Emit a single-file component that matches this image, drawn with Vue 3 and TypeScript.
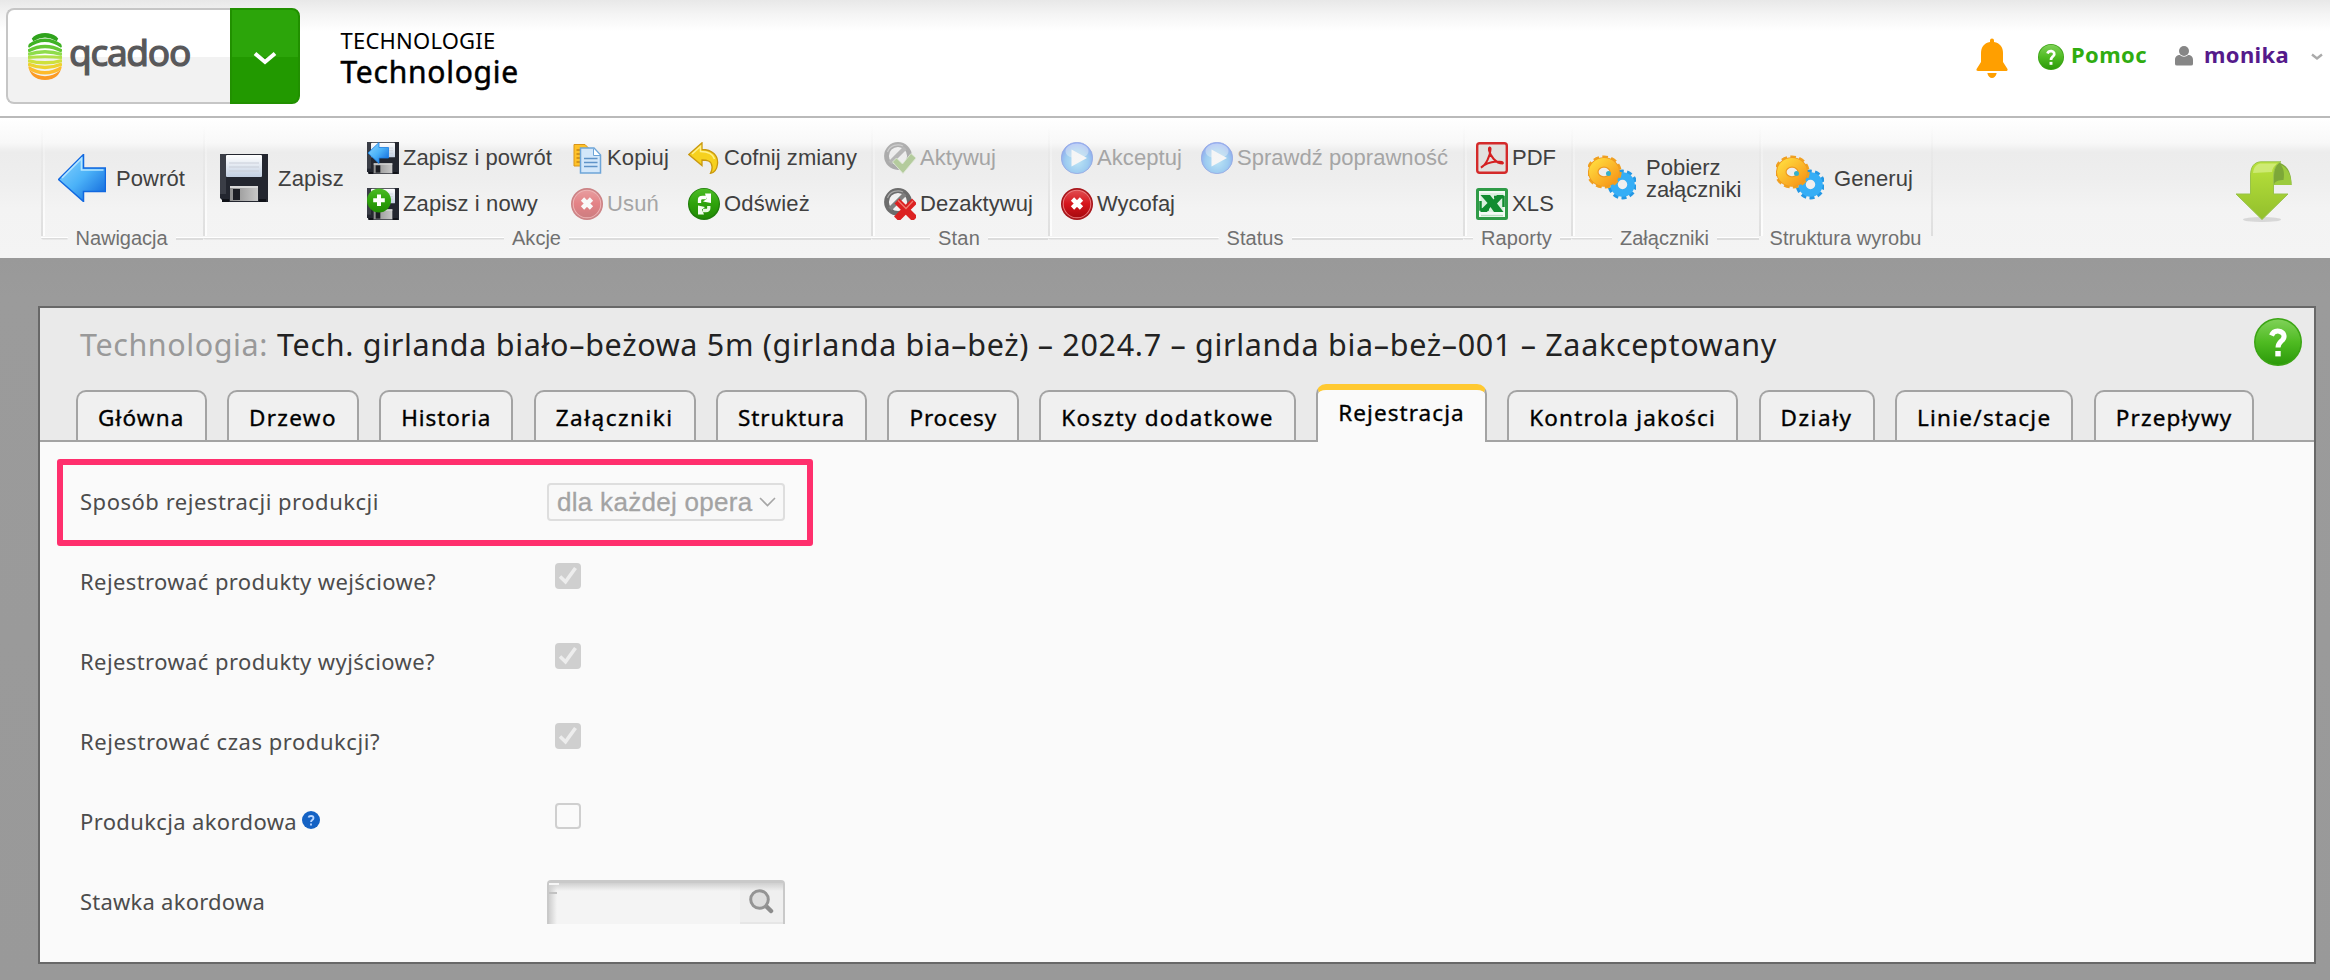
<script setup lang="ts">
type IconName =
  | 'back' | 'save' | 'saveBack' | 'saveNew' | 'copy' | 'cancel' | 'undo' | 'refresh'
  | 'activate' | 'deactivate' | 'play' | 'pdf' | 'xls' | 'gears'

interface Button { icon: IconName; label: string; width: number; disabled?: boolean }
interface Column { big?: boolean; width?: number; items: Button[] }
interface Group { name: string; width: number; captionWidth: number; columns: Column[] }

const groups: Group[] = [
  { name: 'Nawigacja', width: 162, captionWidth: 92, columns: [
    { big: true, items: [{ icon: 'back', label: 'Powrót', width: 69 }] }] },
  { name: 'Akcje', width: 668, captionWidth: 49, columns: [
    { big: true, width: 147, items: [{ icon: 'save', label: 'Zapisz', width: 66 }] },
    { width: 204, items: [
      { icon: 'saveBack', label: 'Zapisz i powrót', width: 149 },
      { icon: 'saveNew', label: 'Zapisz i nowy', width: 135 }] },
    { width: 117, items: [
      { icon: 'copy', label: 'Kopiuj', width: 62 },
      { icon: 'cancel', label: 'Usuń', width: 52, disabled: true }] },
    { items: [
      { icon: 'undo', label: 'Cofnij zmiany', width: 133 },
      { icon: 'refresh', label: 'Odśwież', width: 86 }] }] },
  { name: 'Stan', width: 177, captionWidth: 42, columns: [
    { items: [
      { icon: 'activate', label: 'Aktywuj', width: 76, disabled: true },
      { icon: 'deactivate', label: 'Dezaktywuj', width: 113 }] }] },
  { name: 'Status', width: 415, captionWidth: 57, columns: [
    { width: 140, items: [
      { icon: 'play', label: 'Akceptuj', width: 85, disabled: true },
      { icon: 'cancel', label: 'Wycofaj', width: 78 }] },
    { items: [{ icon: 'play', label: 'Sprawdź poprawność', width: 211, disabled: true }] }] },
  { name: 'Raporty', width: 108, captionWidth: 71, columns: [
    { items: [
      { icon: 'pdf', label: 'PDF', width: 44 },
      { icon: 'xls', label: 'XLS', width: 42 }] }] },
  { name: 'Załączniki', width: 188, captionWidth: 89, columns: [
    { big: true, items: [{ icon: 'gears', label: 'Pobierz\nzałączniki', width: 97 }] }] },
  { name: 'Struktura wyrobu', width: 174, captionWidth: 152, columns: [
    { big: true, items: [{ icon: 'gears', label: 'Generuj', width: 79 }] }] },
]

const tabs = [
  { label: 'Główna', width: 86.5 },
  { label: 'Drzewo', width: 88 },
  { label: 'Historia', width: 90 },
  { label: 'Załączniki', width: 118 },
  { label: 'Struktura', width: 107 },
  { label: 'Procesy', width: 87.5 },
  { label: 'Koszty dodatkowe', width: 212.5 },
  { label: 'Rejestracja', width: 126.5, active: true },
  { label: 'Kontrola jakości', width: 187 },
  { label: 'Działy', width: 72 },
  { label: 'Linie/stacje', width: 134.5 },
  { label: 'Przepływy', width: 116.5 },
]

const fields = [
  { label: 'Sposób rejestracji produkcji', width: 299, type: 'select' },
  { label: 'Rejestrować produkty wejściowe?', width: 356, type: 'check', checked: true },
  { label: 'Rejestrować produkty wyjściowe?', width: 355, type: 'check', checked: true },
  { label: 'Rejestrować czas produkcji?', width: 300, type: 'check', checked: true },
  { label: 'Produkcja akordowa', width: 217, type: 'check', hint: true },
  { label: 'Stawka akordowa', width: 185, type: 'lookup' },
]

// Tracks a single-line label so that it fills the given width.
const vFit = {
  mounted(el: HTMLElement, binding: { value: number }) {
    const text = el.textContent ?? ''
    if (text.includes('\n')) return
    const natural = el.getBoundingClientRect().width
    el.style.letterSpacing = `${(binding.value - natural) / text.length}px`
  },
}
</script>

<template>
  <div class="page">
    <svg class="defs" width="0" height="0" aria-hidden="true">
      <defs>
        <linearGradient id="gBlue" x1="0" y1="0" x2="1" y2="1"><stop offset="0" stop-color="#8fd6ff" /><stop offset=".5" stop-color="#4bb2f8" /><stop offset="1" stop-color="#0a5fd8" /></linearGradient>
        <linearGradient id="gGreen" x1="0" y1="0" x2="0" y2="1"><stop offset="0" stop-color="#7fd158" /><stop offset=".5" stop-color="#4fbb22" /><stop offset="1" stop-color="#2c9a0a" /></linearGradient>
        <linearGradient id="gDeep" x1="0" y1="0" x2="0" y2="1"><stop offset="0" stop-color="#4cbb26" /><stop offset=".5" stop-color="#2fa30c" /><stop offset="1" stop-color="#218a04" /></linearGradient>
        <linearGradient id="gRed" x1="0" y1="0" x2="0" y2="1"><stop offset="0" stop-color="#e04a4e" /><stop offset=".5" stop-color="#d6141c" /><stop offset="1" stop-color="#a80a10" /></linearGradient>
        <radialGradient id="gPlay" cx=".5" cy=".6" r=".6"><stop offset="0" stop-color="#8fe0ff" /><stop offset=".6" stop-color="#52aef4" /><stop offset="1" stop-color="#2f5fee" /></radialGradient>
        <linearGradient id="gGold" x1="0" y1="0" x2="1" y2="1"><stop offset="0" stop-color="#ffd83c" /><stop offset="1" stop-color="#f79a1a" /></linearGradient>
        <linearGradient id="gPaper" x1="0" y1="0" x2="0" y2="1"><stop offset="0" stop-color="#fff" /><stop offset="1" stop-color="#c3d0e2" /></linearGradient>
        <linearGradient id="gLime" x1="0" y1="0" x2="0" y2="1"><stop offset="0" stop-color="#b9e23c" /><stop offset="1" stop-color="#92bf2c" /></linearGradient>
        <linearGradient id="gMetal" x1="0" y1="0" x2="1" y2="0"><stop offset="0" stop-color="#8c8c8c" /><stop offset="1" stop-color="#c8c8c8" /></linearGradient>
        <clipPath id="egg"><path d="M0 14Q3 0 17 0T34 14V33Q31 47 17 47T0 33Z" /></clipPath>
      </defs>
      <symbol id="i-back" viewBox="0 0 48 48"><path d="M.5 25.500 25.500 .5V14H47.500V37.500H25.500V47.500Z" fill="url(#gBlue)" stroke="#1168e0" stroke-width="1.500" /><path d="M4 24 23.500 4.500V16H45.500" fill="none" stroke="#b5e6ff" stroke-width="1.600" /></symbol>
      <symbol id="i-save" viewBox="0 0 48 48"><path d="M0 0H48V48H4L0 44Z" fill="#23262f" /><path d="M0 0H6V40H0Z" fill="#3a3d46" /><rect x="6" y="1" width="36" height="22" rx="1" fill="url(#gPaper)" /><path d="M9 9H39M9 13H39M9 17H39" stroke="#c9ced8" stroke-width="1" /><path d="M10 32H38V47H10Z" fill="url(#gMetal)" /><path d="M10 32H38V34H10Z" fill="#d9d9d9" /><rect x="13" y="35" width="7" height="11" fill="#1c1e24" /><path d="M2 48V45H9V48ZM39 48V45H46V48Z" fill="#101218" /></symbol>
      <symbol id="i-saveBack" viewBox="0 0 32 32"><use href="#i-save" width="32" height="32" /><path d="M1 11 12 .5V5.500H21.500V16H12V21.500Z" fill="url(#gBlue)" stroke="#1a7fe4" stroke-width=".8" /></symbol>
      <symbol id="i-saveNew" viewBox="0 0 32 32"><use href="#i-save" width="32" height="32" /><circle cx="12" cy="12.500" r="12" fill="url(#gDeep)" /><path d="M12 6.500V18M6.200 12.300H17.800" stroke="#fff" stroke-width="4" /></symbol>
      <symbol id="i-copy" viewBox="0 0 32 32"><path d="M3 2.500H14L18.500 7V24H3Z" fill="#ffc229" stroke="#d9951a" /><path d="M5.500 8H15M5.500 12H15M5.500 16H15M5.500 20H12" stroke="#c98510" stroke-width="1.500" /><path d="M9.500 6H23L29.500 13V31H9.500Z" fill="#d3e7fa" stroke="#6ea5d8" stroke-width="1.500" /><path d="M22.500 6.500V13.500H29" fill="#fff" stroke="#6ea5d8" /><path d="M13 16.500H26.500M13 20.500H26.500M13 24.500H26.500" stroke="#5f93c8" stroke-width="1.600" /></symbol>
      <symbol id="i-cancel" viewBox="0 0 32 32"><circle cx="16" cy="16" r="16" fill="#a8161b" /><circle cx="16" cy="16" r="14.300" fill="#ec7a7d" /><circle cx="16" cy="16" r="13.300" fill="url(#gRed)" /><path d="M11.500 11 20.500 20M20.500 11 11.500 20" stroke="#fff" stroke-width="4.600" /></symbol>
      <symbol id="i-undo" viewBox="0 0 32 32"><path d="M.8 12.500 14 .8V7.500C24 7.500 30.500 13.500 29.500 22 29 27.500 26 31.300 22.500 31.300 25 27 24.500 20.500 20.500 19 18.500 18 16.500 18 14 18V23.500Z" fill="#f6d11e" stroke="#c9980f" stroke-width="1.300" /><path d="M4 12 12.500 4.500V9.500C20 9.500 25 12 26.500 17" fill="none" stroke="#fff08a" stroke-width="1.500" /></symbol>
      <symbol id="i-refresh" viewBox="0 0 32 32"><circle cx="16" cy="16" r="16" fill="#1f7d0a" /><circle cx="16" cy="15.500" r="14.800" fill="url(#gDeep)" /><path d="M11.500 15V12Q11.500 9.500 14.500 9.500H18" fill="none" stroke="#fff" stroke-width="3.300" /><path d="M17 5.500H23V15L15 13.500 18.500 11Z" fill="#fff" /><path d="M20.800 18V20Q20.800 22.500 18 22.500H15" fill="none" stroke="#e9f8e2" stroke-width="3.300" /><path d="M16 26.500H10V17.500L17 19 14 21.500Z" fill="#f2fbee" /></symbol>
      <symbol id="i-ring" viewBox="0 0 32 32"><circle cx="14" cy="14" r="11.500" fill="none" stroke="#6c6c6c" stroke-width="4.800" /><path d="M6 21 21 6" stroke="#808080" stroke-width="4.500" /><path d="M3.500 10C6 3 14 1.500 19 4" fill="none" stroke="#a8a8a8" stroke-width="1.200" /></symbol>
      <symbol id="i-activate" viewBox="0 0 32 32"><use href="#i-ring" width="32" height="32" /><path d="M8.500 20 12.500 16 18.500 22 27 11.500 32 16 19 31.500Z" fill="#7cab4f" stroke="#d7e6c8" stroke-width=".8" /></symbol>
      <symbol id="i-deactivate" viewBox="0 0 32 32"><use href="#i-ring" width="32" height="32" /><path d="M13 13 31 31M30.500 13 12.500 31" stroke="#dc2222" stroke-width="7" /><path d="M14 12.500 22 20.500 29 13" fill="none" stroke="#f07a70" stroke-width="1.300" /></symbol>
      <symbol id="i-play" viewBox="0 0 32 32"><circle cx="16" cy="16" r="15.700" fill="url(#gPlay)" stroke="#3d62d8" stroke-width=".8" /><ellipse cx="16" cy="9" rx="11.500" ry="7.500" fill="#fff" opacity=".4" /><path d="M10.500 7.500 26 16 10.500 24.500Z" fill="#fff" /></symbol>
      <symbol id="i-pdf" viewBox="0 0 32 32"><rect x="1.200" y="1.200" width="29.600" height="29.600" rx="2.500" fill="#e2e1de" stroke="#d42a2a" stroke-width="2.400" /><path d="M5 25.500C9.500 23.500 14.500 14 14.500 7 14.500 5 12.500 5 13 8 14 14 20 21.500 26.500 21.500 28 20.500 25 19.300 20 19.500 14 20 9.500 21.500 5 25.500Z" fill="none" stroke="#d42020" stroke-width="2.100" /></symbol>
      <symbol id="i-xls" viewBox="0 0 32 32"><rect x="1.500" y="1.500" width="29" height="29" rx="1" fill="#f4faf5" stroke="#2f9b47" stroke-width="3" /><path d="M4.500 5H27.500V24H4.500Z" fill="#dcf0e0" /><path d="M4.500 7H14L17.500 11.500 21 7H27.500V8.500L21 15.500 27.500 24H18L14.500 19 11 24H4.500V22L11.500 15Z" fill="#118c30" /><path d="M18 9H27.500V19M4.500 13V21.500H13" fill="none" stroke="#118c30" stroke-width="2.500" /><path d="M5 27.500H27" stroke="#b9dfc2" stroke-width="1.400" /></symbol>
      <symbol id="i-gears" viewBox="0 0 48 48">
        <circle cx="34.500" cy="30.500" r="12.400" fill="none" stroke="#2598e4" stroke-width="5" stroke-dasharray="4.740 3.050" /><circle cx="34.500" cy="30.500" r="8.500" fill="none" stroke="#35aef6" stroke-width="7.500" />
        <ellipse cx="16" cy="18" rx="15.200" ry="14" fill="none" stroke="#f0a020" stroke-width="5" stroke-dasharray="5.300 3.050" /><ellipse cx="16" cy="18" rx="10.600" ry="9.500" fill="none" stroke="#ee9a20" stroke-width="10.500" /><ellipse cx="16" cy="18" rx="10.800" ry="9.700" fill="none" stroke="url(#gGold)" stroke-width="8.500" />
        <circle cx="20.500" cy="19.500" r="2.500" fill="#36b0c8" />
      </symbol>
      <symbol id="i-help" viewBox="0 0 48 48"><circle cx="24" cy="24" r="24" fill="#3ba414" /><circle cx="24" cy="24" r="22.500" fill="url(#gGreen)" /><path d="M17.500 17.500C19 13.500 22 12.800 25 13.200 30 14 31.500 18.500 28.500 22 26 24.500 24 25.500 24 29.500" fill="none" stroke="#fff" stroke-width="5" /><rect x="21.300" y="33" width="5.400" height="5.400" fill="#fff" /></symbol>
    </svg>

    <header class="top">
      <div class="brand">
        <div class="logo">
          <svg class="mark" viewBox="0 0 34 47">
            <g clip-path="url(#egg)" fill="none" stroke-width="3.300">
              <path d="M4 6Q17 -2 30 6" stroke="#2fa31c" stroke-width="5" />
              <path d="M0 13.500Q17 1 34 13.500" stroke="#3fb224" />
              <path d="M0 18Q17 9 34 18" stroke="#64c834" />
              <path d="M0 21.500Q17 16 34 21.500" stroke="#8fdc4c" />
              <path d="M0 24.500Q17 23 34 24.500" stroke="#b2e04a" stroke-width="2.800" />
              <path d="M0 27.500Q17 32 34 27.500" stroke="#cfe03c" />
              <path d="M0 31Q17 38 34 31" stroke="#ecd32e" />
              <path d="M0 34.500Q17 45 34 34.500" stroke="#fdbb2c" />
              <path d="M0 38.500Q17 52 34 38.500" stroke="#fb9a24" stroke-width="4" />
            </g>
          </svg>
          <span v-fit="121" class="word">qcadoo</span>
        </div>
        <div class="drop">
          <svg width="24" height="14" viewBox="0 0 24 14"><path d="M2 2.500 12 11 22 2.500" fill="none" stroke="#fff" stroke-width="4" /></svg>
        </div>
      </div>
      <div class="crumbs">
        <div class="section"><span v-fit="155">TECHNOLOGIE</span></div>
        <div class="view"><span v-fit="178.500">Technologie</span></div>
      </div>
      <div class="user-bar">
        <svg class="bell" viewBox="0 0 32 40"><path d="M14 4V2.500a2 2 0 0 1 4 0V4C24 5 27 9.500 27 15V24L31.500 31C32 32.500 31 33 30 33H2C.8 33 0 32.300 .6 31L5 24V15C5 9.500 8 5 14 4ZM11.300 35H20.700C20 38.500 18 40 16 40S12 38.500 11.300 35Z" fill="#ff9f00" /></svg>
        <svg class="help-small"><use href="#i-help" /></svg>
        <span v-fit="76" class="link green">Pomoc</span>
        <svg class="person" viewBox="0 0 18 20"><circle cx="9" cy="5" r="5" fill="#868686" /><path d="M0 18V14C0 10.500 2 9 5 9 7 11.300 11 11.300 13 9 16 9 18 10.500 18 14V18Q18 19.500 16 19.500H2Q0 19.500 0 18Z" fill="#868686" /></svg>
        <span v-fit="85" class="link purple">monika</span>
        <svg class="caret" viewBox="0 0 12 8"><path d="M1 1.500 6 5.500 11 1.500" fill="none" stroke="#aaa" stroke-width="2.400" /></svg>
      </div>
    </header>

    <nav class="ribbon">
      <section v-for="g in groups" :key="g.name" class="group" :class="{ wide: g.columns[0].big }" :style="{ width: g.width + 'px' }">
        <div class="columns">
          <div v-for="(c, i) in g.columns" :key="i" class="column" :class="{ big: c.big }" :style="c.width ? { width: c.width + 'px' } : undefined">
            <div v-for="b in c.items" :key="b.label" class="button" :class="{ disabled: b.disabled }">
              <svg class="icon"><use :href="'#i-' + b.icon" /></svg>
              <span v-fit="b.width" class="text">{{ b.label }}</span>
            </div>
          </div>
        </div>
        <div class="legend"><span v-fit="g.captionWidth" class="caption">{{ g.name }}</span></div>
      </section>
      <svg class="pull" viewBox="0 0 58 62">
        <ellipse cx="27" cy="58.500" rx="19" ry="2.500" fill="#bbb" opacity=".5" />
        <path d="M39 1C50 1 56.500 9 56.500 24H38.500V10Z" fill="#7da838" />
        <path d="M46 4C53 7 56.500 15 56.500 24H39C39 20 45 19 48.500 19 49.500 13 49 8 46 4Z" fill="#9ccb3e" />
        <path d="M15.500 33V15C15.500 6 19 1 26 .8H46C41 3 38.500 8 38.500 17V33H53L27 58.500 1 33Z" fill="url(#gLime)" stroke="#98c24a" stroke-width="1" />
        <path d="M18 12C19 5 22 2.500 27 2.500H42C39 5 37 8 37 11Z" fill="#d9f08c" opacity=".7" />
      </svg>
    </nav>

    <main class="desk">
      <div class="window">
        <div class="title">
          <span v-fit="188" class="kind">Technologia:</span>
          <span v-fit="1500" class="name">Tech. girlanda biało–beżowa 5m (girlanda bia–beż) – 2024.7 – girlanda bia–beż–001 – Zaakceptowany</span>
          <svg class="help"><use href="#i-help" /></svg>
        </div>
        <div class="tabs">
          <div v-for="t in tabs" :key="t.label" class="tab" :class="{ active: t.active }"><span v-fit="t.width">{{ t.label }}</span></div>
        </div>
        <div class="form">
          <div class="highlight"></div>
          <div v-for="f in fields" :key="f.label" class="row">
            <div class="label">
              <span v-fit="f.width">{{ f.label }}</span>
              <svg v-if="f.hint" class="hint" viewBox="0 0 18 18"><circle cx="9" cy="9" r="9" fill="#1462c4" /><path d="M6.500 6.500C7 4.500 11.500 4.300 11.500 7 11.500 9 9 9 9 11M9 12.500V14.500" fill="none" stroke="#b9d6ff" stroke-width="1.800" /></svg>
            </div>
            <div v-if="f.type === 'select'" class="select">
              <span v-fit="195.500">dla każdej opera</span>
              <svg width="17" height="10" viewBox="0 0 17 10"><path d="M1 1 8.500 8.500 16 1" fill="none" stroke="#a6a6a6" stroke-width="1.600" /></svg>
            </div>
            <div v-else-if="f.type === 'check'" class="check" :class="{ checked: f.checked }">
              <svg v-if="f.checked" width="26" height="26" viewBox="0 0 26 26"><path d="M5 13.500 10.500 18.800 20.500 5" fill="none" stroke="#ededed" stroke-width="3.600" /></svg>
            </div>
            <div v-else class="lookup">
              <div class="entry"></div>
              <div class="find"><svg width="25" height="26" viewBox="0 0 25 26"><path d="M17 17 22 22" stroke="#8c8c8c" stroke-width="4.500" stroke-linecap="round" /><circle cx="10.500" cy="10.500" r="8.800" fill="#dedede" stroke="#949494" stroke-width="3" /></svg></div>
            </div>
          </div>
        </div>
      </div>
    </main>
  </div>
</template>

<style>
body { background: #999; overflow: hidden; }
</style>

<style scoped>
.page { width: 2330px; height: 980px; display: flex; flex-direction: column; overflow: hidden; background: #999; font-family: "Noto Sans", "Open Sans", sans-serif; white-space: nowrap; }
.page span { display: inline-block; }
.defs { position: absolute; }

.top { height: 116px; flex: none; display: flex; align-items: flex-start; background: linear-gradient(#e8e8e8, #f4f4f4 14px, #fff 31px); border-bottom: 2px solid #bababa; }
.brand { display: flex; margin: 8px 0 0 6px; width: 294px; height: 96px; }
.logo { box-sizing: border-box; width: 224px; height: 96px; border: 2px solid #c6c6c6; border-right: 0; border-radius: 8px 0 0 8px; background: linear-gradient(#fff 47px, #f2f2f2 47px); display: flex; align-items: flex-start; padding: 23px 0 0 20px; }
.mark { width: 34px; height: 47px; flex: none; }
.word { margin: -6px 0 0 7px; font-size: 37px; line-height: 50px; color: #58585a; -webkit-text-stroke: 1.200px #58585a; }
.drop { box-sizing: border-box; width: 70px; height: 96px; border: 2px solid #219000; border-radius: 0 8px 8px 0; background: linear-gradient(#2ca50a 47px, #229900 47px); display: flex; align-items: center; justify-content: center; padding-top: 4px; }
.crumbs { margin: 25px 0 0 40.500px; color: #000; }
.section { font-size: 22px; line-height: 30px; }
.view { font-size: 30px; line-height: 34px; -webkit-text-stroke: .5px #000; }
.user-bar { margin-left: auto; display: flex; align-items: flex-start; padding-right: 7px; }
.bell { width: 32px; height: 40px; margin: 38px 30px 0 0; }
.help-small { width: 26px; height: 26px; margin: 44px 7px 0 0; }
.link { margin-top: 39px; font-size: 22px; line-height: 30px; font-weight: 700; }
.green { color: #30ac10; margin-right: 28px; }
.purple { color: #551a8b; margin-right: 22px; }
.person { width: 18px; height: 20px; margin: 46px 11px 0 0; }
.caret { width: 12px; height: 8px; margin-top: 53px; }

.ribbon { height: 140px; flex: none; display: flex; padding-left: 40.500px; background: linear-gradient(#fff, #f8f8f8 25px, #ececec 34px, #eee 60px, #f3f3f3 90px, #f4f4f4); font-family: "Liberation Sans", Arial, sans-serif; }
.group { flex: none; box-sizing: border-box; height: 140px; padding-top: 24px; background: linear-gradient(rgba(222,222,222,0), #dedede) 0 8px / 2px 110px no-repeat, linear-gradient(rgba(255,255,255,0), #fdfdfd) 2px 8px / 2px 110px no-repeat; }
.group:last-of-type { background: linear-gradient(rgba(222,222,222,0), #dedede) 0 8px / 2px 110px no-repeat, linear-gradient(rgba(255,255,255,0), #fdfdfd) 2px 8px / 2px 110px no-repeat, linear-gradient(rgba(222,222,222,0), #dedede) right 8px / 2px 110px no-repeat; }
.columns { display: flex; height: 84px; padding-left: 13.500px; }
.wide .columns { padding-left: 17.500px; }
.column { display: flex; flex-direction: column; gap: 14px; }
.column.big { padding-top: 12px; }
.button { display: flex; align-items: center; height: 32px; gap: 4px; color: #404040; font-size: 22px; line-height: 22px; }
.big .button { height: 48px; gap: 10px; }
.icon { width: 32px; height: 32px; flex: none; }
.big .icon { width: 48px; height: 48px; }
.text { white-space: pre; }
.big .text { padding-top: 2px; }
.disabled .icon { opacity: .5; }
.disabled { color: #a5a5a5; }
.legend { display: flex; align-items: center; height: 24px; color: #707070; font-size: 20px; line-height: 24px; }
.legend::before, .legend::after { content: ""; flex: 1; height: 2px; background: #dcdcdc; border-top: 1px solid #fff; }
.legend::before { border-bottom-left-radius: 6px; margin-right: 8px; }
.legend::after { margin-left: 8px; }
.group:last-of-type .legend::before, .group:last-of-type .legend::after { visibility: hidden; }
.pull { width: 58px; height: 62px; margin: 43px 37px 0 auto; }

.desk { flex: 1; padding: 48px 14px 16px 38px; background: linear-gradient(#999, #9b9b9b 40px, #999); }
.window { box-sizing: border-box; width: 2278px; height: 658px; border: 2px solid #686868; background: #fafafa; }
.title { height: 76px; background: #eaeaea; display: flex; align-items: flex-start; padding: 0 12px 0 40px; font-size: 30.500px; line-height: 40px; }
.title span { margin-top: 16px; }
.kind { color: #999; margin-right: 9px; }
.name { color: #222; }
.help { width: 48px; height: 48px; margin: 10px 0 0 auto; }
.tabs { height: 58px; box-sizing: border-box; display: flex; align-items: flex-end; gap: 20.400px; padding-left: 36px; background: #eaeaea; border-bottom: 2px solid #a3a3a3; font-size: 22.500px; line-height: 30px; color: #000; -webkit-text-stroke: .35px #000; }
.tab { box-sizing: border-box; height: 50px; border: 2px solid #a3a3a3; border-bottom: 0; border-radius: 10px 10px 0 0; background: #f0f0f0; padding: 11px 20px 0; }
.tab.active { height: 58px; margin-bottom: -2px; border-top: 6px solid #ffc931; background: #fafafa; padding-top: 8px; }
.form { position: relative; padding-top: 19px; }
.highlight { position: absolute; left: 17px; top: 17px; width: 756px; height: 87px; box-sizing: border-box; border: 6px solid #ff2f6d; border-radius: 3px; }
.row { height: 80px; display: flex; align-items: center; padding-left: 40px; }
.label { width: 467px; display: flex; align-items: center; font-size: 22px; line-height: 30px; color: #4c4c4c; }
.hint { width: 18px; height: 18px; margin: -2px 0 0 5px; }
.select { box-sizing: border-box; width: 238px; height: 38px; margin-top: 2px; border: 2px solid #dedede; border-radius: 4px; background: #f8f8f8; display: flex; align-items: center; justify-content: space-between; padding: 0 7px 0 8px; font: 26px/32px "Liberation Sans", Arial, sans-serif; color: #a3a3a3; -webkit-text-stroke: .3px #a3a3a3; }
.check { box-sizing: border-box; width: 26px; height: 26px; margin: -10px 0 0 8px; border: 2px solid #cfcfcf; border-radius: 4px; }
.check.checked { border: 0; background: #cfcfcf; }
.check svg { display: block; }
.lookup { box-sizing: border-box; width: 238px; height: 44px; margin-top: 2px; display: flex; border-top: 3px solid #c9c9c9; border-right: 2px solid #c9c9c9; border-left: 2px solid #c9c9c9; border-radius: 4px 4px 0 0; background: linear-gradient(#d0d0d0, rgba(244,244,244,0) 8px), linear-gradient(90deg, #cfcfcf, #f4f4f4 8px); }
.entry { flex: 1; background: linear-gradient(#c2c2c2, #c2c2c2) 0 9px / 8px 2px no-repeat, linear-gradient(#f6f6f6, #f6f6f6) 0 0 / 10px 2px no-repeat; }
.find { width: 43px; display: flex; align-items: flex-start; justify-content: center; padding-top: 6px; border-bottom: 2px solid #e6e6e6; background: linear-gradient(#d0d0d0, #efefef 8px); }
</style>
